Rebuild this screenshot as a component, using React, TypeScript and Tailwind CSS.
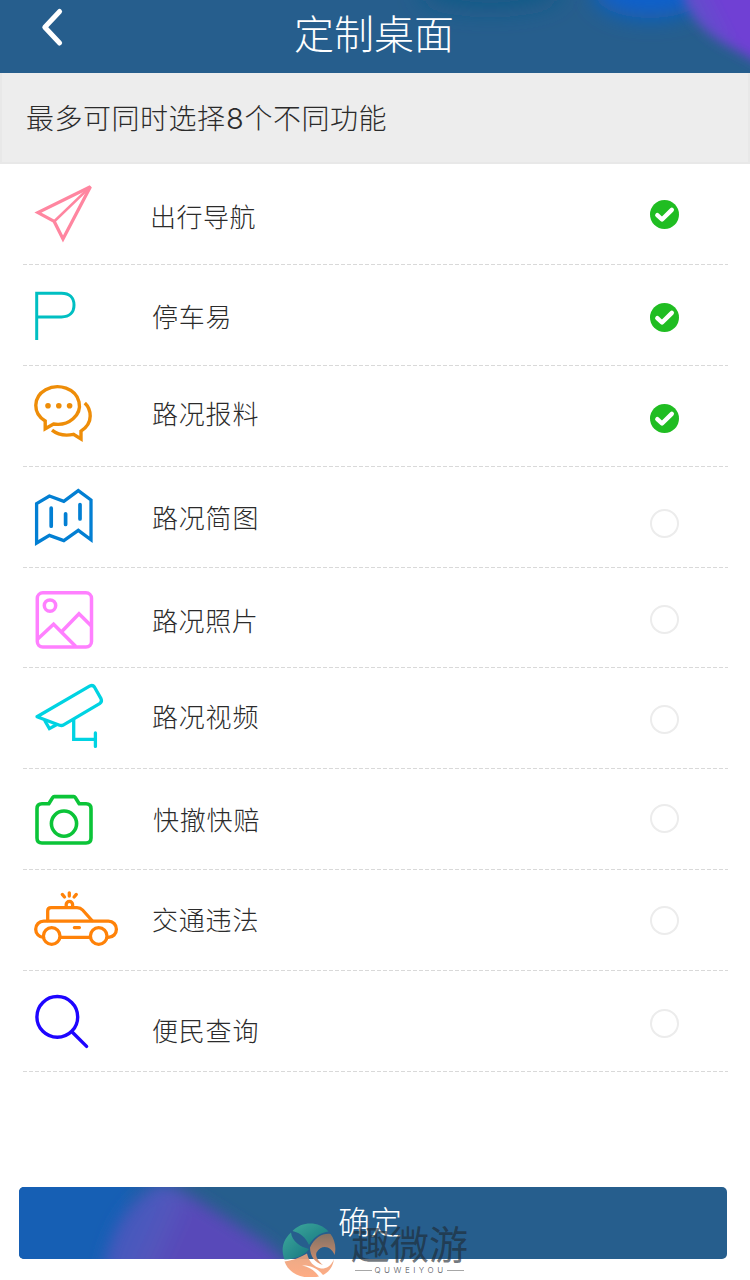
import { useState } from "react";
import type { ReactNode } from "react";
import clsx from "clsx";

interface Feature {
  name: string;
  color: string;
  icon: ReactNode;
  row: string;
  label: string;
  toggle: string;
}

// every icon is drawn on a 100x100 canvas that fills the row height
const FEATURES: Feature[] = [
  {
    name: "出行导航",
    color: "#ff86a0",
    row: "h-[101px]",
    label: "mt-[32px] ml-[20px] tracking-[0.5px]",
    toggle: "mt-[36px]",
    icon: (
      <>
        <path strokeWidth="3.3" strokeLinejoin="miter" strokeMiterlimit="3" d="M60.4 22.8 8 48.6 24.2 57.4 33 75Z" />
        <path strokeWidth="2.6" d="M24.4 57.2 59.6 23.4" />
      </>
    ),
  },
  {
    name: "停车易",
    color: "#00bfc2",
    row: "h-[101px]",
    label: "mt-[31px] ml-[22px] tracking-[0.8px]",
    toggle: "mt-[38px]",
    icon: (
      <path strokeWidth="3" strokeLinecap="butt" strokeLinejoin="miter" d="M6.7 75V28.3H31.5C39.5 28.3 44 32.5 44 40S39.5 51.9 31.5 51.9H6.7" />
    ),
  },
  {
    name: "路况报料",
    color: "#ee8d08",
    row: "h-[101px]",
    label: "mt-[27px] ml-[22px] tracking-[0.8px]",
    toggle: "mt-[38px]",
    icon: (
      <>
        <path strokeWidth="3.4" strokeLinejoin="miter" d="M15.2 55V62.8L23.5 58A21.8 18.8 0 1 0 15.2 55Z" />
        <path strokeWidth="3.4" strokeLinecap="butt" strokeLinejoin="miter" d="M54.8 37C58.5 40.5 60.2 45 60.2 50 60.2 56.5 56.5 61.5 51 65.2V73L43.5 68.4C35.5 70 28 69 22 64.2" />
        <g fill="currentColor" stroke="none">
          <circle cx="18" cy="39.7" r="2.8" />
          <circle cx="28.8" cy="39.7" r="2.8" />
          <circle cx="39.6" cy="39.7" r="2.8" />
        </g>
      </>
    ),
  },
  {
    name: "路况简图",
    color: "#027fd3",
    row: "h-[101px]",
    label: "mt-[30px] ml-[22px] tracking-[0.8px]",
    toggle: "mt-[42px]",
    icon: (
      <>
        <path strokeWidth="3.3" strokeLinejoin="miter" d="M6.6 36.7 19.4 29 33.8 34.4 48.3 23.6 61 33V72.8L48.3 63.4 33.8 73.6 19.4 68.4 6.6 76Z" />
        <path strokeWidth="3.7" d="M21.2 41.2V59.2M35.6 46.8V57.4M50 37.6V52" />
      </>
    ),
  },
  {
    name: "路况照片",
    color: "#ff80ff",
    row: "h-[100px]",
    label: "mt-[32px] ml-[22px] tracking-[0.6px]",
    toggle: "mt-[37px]",
    icon: (
      <>
        <rect strokeWidth="3.5" x="7.3" y="24.8" width="54.2" height="54.2" rx="5.5" />
        <circle strokeWidth="3.5" cx="20" cy="37.6" r="5.7" />
        <path strokeWidth="3.5" strokeLinecap="butt" strokeLinejoin="miter" d="M8 70.8 23.6 56.2 45.8 78.6M31.6 63.8 49 45.8 61.4 58" />
      </>
    ),
  },
  {
    name: "路况视频",
    color: "#00d3e2",
    row: "h-[101px]",
    label: "mt-[28px] ml-[22px] tracking-[0.8px]",
    toggle: "mt-[37px]",
    icon: (
      <>
        <path strokeWidth="3.3" d="M7 48.7 60 17.9Q62.8 16.6 64.4 19L71 30.6Q72.4 33.7 69.6 35.6L33.6 56.8Q31.8 58 29.6 57.2Z" />
        <path strokeWidth="3.3" strokeLinejoin="miter" d="M15 53 19.4 60.6 26.4 56.8" />
        <path strokeWidth="3.3" strokeLinejoin="miter" d="M43.7 52V71.4H65.4M65.4 65V78.4" />
      </>
    ),
  },
  {
    name: "快撤快赔",
    color: "#0bc438",
    row: "h-[101px]",
    label: "mt-[30px] ml-[23px] tracking-[0.8px]",
    toggle: "mt-[35px]",
    icon: (
      <>
        <path strokeWidth="3.6" d="M12 34.7H18.8L22.8 28.4Q23.3 27.6 24.2 27.6H43.8Q44.7 27.6 45.2 28.4L49.2 34.7H56Q61 34.7 61 39.7V69Q61 74 56 74H12Q7 74 7 69V39.7Q7 34.7 12 34.7Z" />
        <circle strokeWidth="3.6" cx="34" cy="54.6" r="12.6" />
      </>
    ),
  },
  {
    name: "交通违法",
    color: "#ff8208",
    row: "h-[101px]",
    label: "mt-[29px] ml-[22px] tracking-[0.8px]",
    toggle: "mt-[36px]",
    icon: (
      <>
        <path strokeWidth="3.3" d="M13.5 67.3C9 67 5.7 63.6 5.7 59.2 5.7 54.6 9.2 51.2 13.8 51.2H78.4C83 51.2 86.4 54.7 86.4 59.2 86.4 63.8 83 67.3 78.4 67.3M31 67.3H59.5" />
        <path strokeWidth="3.3" d="M17.7 50.5V41Q17.7 37.6 21.1 37.6H47Q50.4 37.6 52.6 40L62 50.5" />
        <circle strokeWidth="3.3" cx="21.7" cy="66" r="8.3" />
        <circle strokeWidth="3.3" cx="68.7" cy="66" r="8.3" />
        <path strokeWidth="3.3" d="M36.2 36.6V34.6A3.1 3.1 0 0 1 42.6 34.6V36.6M39.3 22.8V26M32.3 24.4 34.5 27M46.3 24.4 44.1 27M44.4 57.6H49.4" />
      </>
    ),
  },
  {
    name: "便民查询",
    color: "#1e05ff",
    row: "h-[101px]",
    label: "mt-[39px] ml-[22px] tracking-[0.8px]",
    toggle: "mt-[38px]",
    icon: (
      <>
        <circle strokeWidth="3.4" cx="27.3" cy="45.9" r="20.4" />
        <path strokeWidth="3.4" d="M42.4 61.2 56.6 75.4" />
      </>
    ),
  },
];

function Toggle({ on }: { on: boolean }) {
  if (!on) return <span className="block size-[29px] rounded-full border-2 border-[#ececec]" />;
  return (
    <svg width="29" height="29" viewBox="0 0 29 29" fill="none">
      <circle cx="14.5" cy="14.5" r="14.5" fill="#20bd22" />
      <path d="M7.3 15.2 12 19.5 21.8 9.9" stroke="#fff" strokeWidth="4.4" strokeLinecap="round" strokeLinejoin="round" />
    </svg>
  );
}

// soft colour spots behind the title
function HeaderGlow() {
  return (
    <svg className="absolute inset-0" width="750" height="73" viewBox="0 0 750 73">
      <defs>
        <filter id="headerBlur" x="-50%" y="-100%" width="200%" height="300%">
          <feGaussianBlur stdDeviation="11" />
        </filter>
        <filter id="headerBlurSharp" x="-50%" y="-50%" width="200%" height="200%">
          <feGaussianBlur stdDeviation="6" />
        </filter>
        <linearGradient id="headerPurple" gradientUnits="userSpaceOnUse" x1="685" y1="30" x2="725" y2="10">
          <stop offset="0" stopColor="#5759c4" />
          <stop offset="1" stopColor="#7040d4" />
        </linearGradient>
      </defs>
      <ellipse cx="490" cy="-8" rx="70" ry="18" fill="#165a87" filter="url(#headerBlur)" />
      <ellipse cx="650" cy="-8" rx="56" ry="26" fill="#0d60cc" filter="url(#headerBlur)" />
      <path d="M680-30C680 4 694 28 728 46L790 80V-30Z" fill="url(#headerPurple)" filter="url(#headerBlurSharp)" />
    </svg>
  );
}

function ButtonGlow() {
  return (
    <svg className="absolute inset-0" width="708" height="72" viewBox="0 0 708 72">
      <defs>
        <filter id="buttonBlur" x="-30%" y="-50%" width="160%" height="200%">
          <feGaussianBlur stdDeviation="8" />
        </filter>
        <linearGradient id="buttonPurple" gradientUnits="userSpaceOnUse" x1="120" y1="25" x2="165" y2="45">
          <stop offset="0" stopColor="#4659bd" />
          <stop offset="0.45" stopColor="#5257bc" />
          <stop offset="1" stopColor="#584ab9" />
        </linearGradient>
        <linearGradient id="buttonBlue" gradientUnits="userSpaceOnUse" x1="100" y1="0" x2="165" y2="0">
          <stop offset="0" stopColor="#165fb4" />
          <stop offset="1" stopColor="#165fb4" stopOpacity="0" />
        </linearGradient>
      </defs>
      <rect width="165" height="72" fill="url(#buttonBlue)" />
      <path d="M82 110C84 50 108 12 142-4L160 2 250 58 305 110Z" fill="url(#buttonPurple)" filter="url(#buttonBlur)" />
    </svg>
  );
}

function Watermark() {
  return (
    <div className="pointer-events-none absolute left-[282px] top-[1223px] flex">
      <svg width="54" height="54" viewBox="0 0 54 54" className="opacity-90">
        <defs>
          <linearGradient id="teal" x1="0" y1="0" x2="1" y2="1">
            <stop offset="0" stopColor="#3fae9c" />
            <stop offset="1" stopColor="#147a80" />
          </linearGradient>
          <linearGradient id="brown" x1="0" y1="0" x2="0" y2="1">
            <stop offset="0" stopColor="#8f7560" />
            <stop offset="1" stopColor="#e8956c" />
          </linearGradient>
          <linearGradient id="peach" x1="0" y1="0" x2="0" y2="1">
            <stop offset="0" stopColor="#e8a07a" />
            <stop offset="1" stopColor="#ffa578" />
          </linearGradient>
        </defs>
        {/* two teal blades */}
        <path fill="url(#teal)" d="M10.5 8C20-2 37-2 46.500 8.500 37 10 31 15 27 22 24 15 19 10 10.500 8Z" />
        <path fill="url(#teal)" d="M9 9.500C0 18-1 27 2.500 36.500 13 36 22 33 27 26 19 24 10 19 9 9.500Z" />
        {/* warm blades */}
        <path fill="url(#brown)" d="M28 24.500C33 14 41 10 48.500 11 53 17 54.500 25 52.500 32 50 24 40 20 34.500 29.500 33 34 37 39 41 42 33 40 28 33 28 24.500Z" />
        <path fill="url(#peach)" d="M2.500 38.500C11 37.500 19 34 25 30.500 27 39 32 44 39 45.500 43 46 49 44 52 36 51 44 47 49 41 52 36 46 29 42 20 42.500 28 44 33 48 37 53.500 21 57 7 51 2.500 38.500Z" />
      </svg>
      <div className="ml-[15px] flex flex-col items-center text-[#1f2a33]/65">
        <span className="-mt-[3px] h-[40px] text-[39px] leading-[44px] font-normal">趣微游</span>
        <span className="mt-[5px] flex items-center text-[8px] leading-[10px] font-normal">
          <i className="h-px w-[17px] bg-[#222]/40" />
          <span className="ml-[2px] font-['Inter'] tracking-[3.5px]">QUWEIYOU</span>
          <i className="h-px w-[17px] bg-[#222]/40" />
        </span>
      </div>
    </div>
  );
}

export default function App() {
  const [selected, setSelected] = useState(["出行导航", "停车易", "路况报料"]);

  function toggle(name: string) {
    setSelected((prev) => {
      if (prev.includes(name)) return prev.filter((n) => n !== name);
      return prev.length < 8 ? [...prev, name] : prev;
    });
  }

  return (
    <div className="relative h-[1280px] w-[750px] overflow-hidden bg-white font-['Noto_Sans_CJK_SC',sans-serif] font-light text-[#2b2b2b]">
      {/* Header */}
      <header className="relative flex h-[73px] overflow-hidden bg-[#265e8d]">
        <HeaderGlow />
        <button aria-label="返回" className="relative h-[73px] w-[100px]">
          <svg width="100" height="73" viewBox="0 0 100 73" fill="none">
            <path d="M59.6 11.5 44.8 27.2 59.6 43" stroke="#fff" strokeWidth="5" strokeLinecap="round" strokeLinejoin="round" />
          </svg>
        </button>
        <h1 className="relative mr-[102px] flex-1 text-center text-[40px] leading-[64px] text-white">定制桌面</h1>
      </header>

      {/* Hint */}
      <p className="h-[91px] border-x-2 border-b-2 border-[#e8e8e8] bg-[#ededed] pl-6 text-[28px] leading-[88px] tracking-[0.5px]">
        最多可同时选择<span className="inline-block w-[19px] text-center font-['Inter'] text-[29px] leading-none">8</span>个不同功能
      </p>

      {/* Feature list */}
      <ul className="mr-[22px] ml-[23px]">
        {FEATURES.map((f) => (
          <li key={f.name} onClick={() => toggle(f.name)} className={clsx("flex flex-col", f.row)}>
            <div className="flex min-h-0 flex-1 items-start">
              <svg width="100" height="100" viewBox="0 0 100 100" fill="none" stroke="currentColor" strokeLinecap="round" strokeLinejoin="round" className="mr-[0.5px] ml-[6.5px] shrink-0" style={{ color: f.color }}>
                {f.icon}
              </svg>
              <span className={clsx("flex-1 text-[26px] leading-[40px]", f.label)}>{f.name}</span>
              <span className={clsx("mr-[49px]", f.toggle)}>
                <Toggle on={selected.includes(f.name)} />
              </span>
            </div>
            <i className="block h-px shrink-0 bg-[repeating-linear-gradient(90deg,#d9d9d9_0px,#d9d9d9_4px,transparent_4px,transparent_6px)]" />
          </li>
        ))}
      </ul>

      {/* Confirm */}
      <button className="relative mt-[115px] ml-[19px] block h-[72px] w-[708px] overflow-hidden rounded-[5px] bg-[#265e8d] pr-[6px] pb-[6px] text-[32px] leading-[66px] text-white">
        <ButtonGlow />
        <span className="relative block">确定</span>
      </button>

      <Watermark />
    </div>
  );
}
